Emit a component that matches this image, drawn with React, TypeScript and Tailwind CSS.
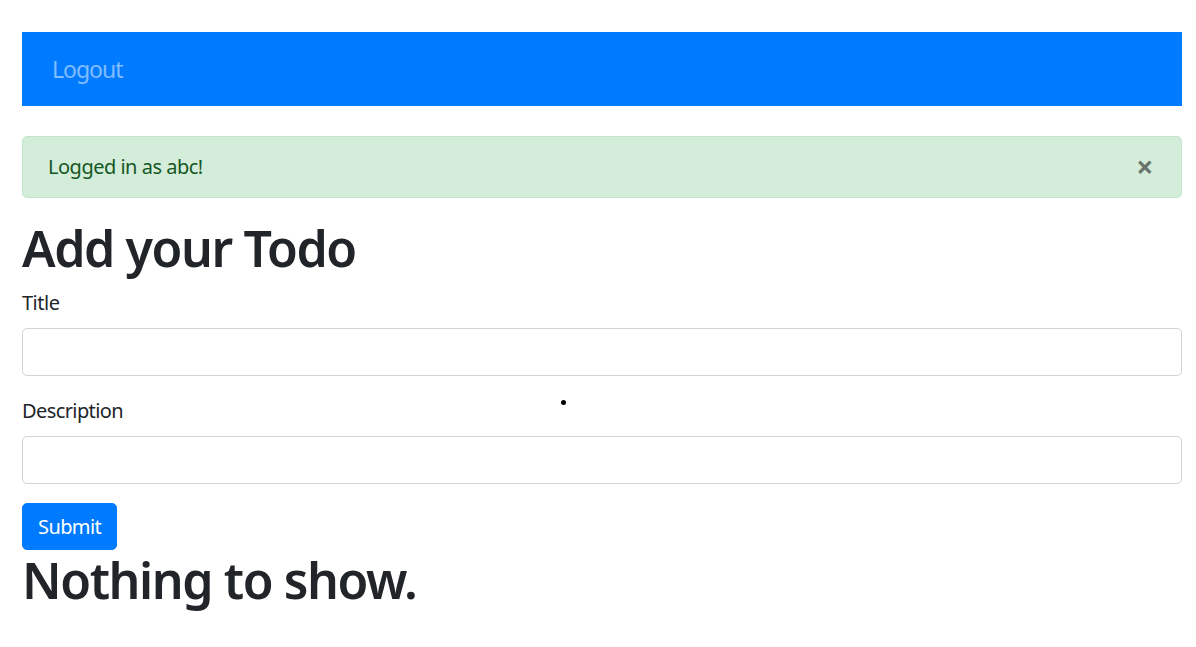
import React from "react";

export default function App() {
  return (
    <div
      className="relative min-h-[647px] bg-white pl-[22px] pr-[14px] pt-[32px] text-[#212529]"
      style={{ fontFamily: '"Noto Sans", "Open Sans", sans-serif' }}
    >
      <nav className="flex h-[74px] items-center bg-[#007bff] px-[20px]">
        <a className="px-[10px] text-[23px] leading-[30px] tracking-[-1px] text-[rgba(255,255,255,0.5)]">Logout</a>
      </nav>

      <div className="relative mt-[30px] mb-[20px] flex h-[62px] items-center rounded-[5px] border border-[#c3e6cb] bg-[#d4edda] px-[25px] text-[20px] leading-[30px] tracking-[-0.5px] text-[#155724]">
        <span>Logged in as abc!</span>
        <button className="absolute right-[28px] top-1/2 -translate-y-1/2 text-[30px] leading-none font-bold text-black opacity-50">
          ×
        </button>
      </div>

      <h1 className="mb-[10px] text-[50px] leading-[60px] font-semibold tracking-[-1.4px]">Add your Todo</h1>

      <form>
        <div className="mb-[20px]">
          <label className="mb-[10px] block text-[20px] leading-[30px] tracking-[-0.5px]">Title</label>
          <input className="block h-[48px] w-full rounded-[5px] border border-[#ced4da] px-[15px] text-[20px]" />
        </div>
        <div className="mb-[20px]">
          <label className="mb-[10px] block text-[20px] leading-[30px] tracking-[-0.6px]">Description</label>
          <input className="block h-[48px] w-full rounded-[5px] border border-[#ced4da] px-[15px] text-[20px]" />
        </div>
        <button
          type="button"
          className="-mt-[1px] block h-[47px] rounded-[5px] border border-[#007bff] bg-[#007bff] px-[15px] text-[20px] leading-[30px] tracking-[-0.6px] text-white"
        >
          Submit
        </button>
      </form>

      <h1 className="text-[50px] leading-[60px] font-semibold tracking-[-1.4px]">Nothing to show.</h1>

      <div className="absolute left-[561px] top-[400px] h-[5px] w-[5px] rounded-full bg-black" />
    </div>
  );
}
